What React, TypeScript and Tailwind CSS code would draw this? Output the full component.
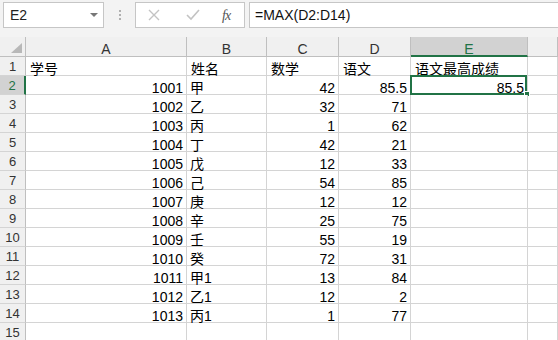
import { Fragment } from 'react';

const rows: [number, string, number, number][] = [
  [1001, '甲', 42, 85.5],
  [1002, '乙', 32, 71],
  [1003, '丙', 1, 62],
  [1004, '丁', 42, 21],
  [1005, '戊', 12, 33],
  [1006, '己', 54, 85],
  [1007, '庚', 12, 12],
  [1008, '辛', 25, 75],
  [1009, '壬', 55, 19],
  [1010, '癸', 72, 31],
  [1011, '甲1', 13, 84],
  [1012, '乙1', 12, 2],
  [1013, '丙1', 1, 77],
];

// F is wider than the window, so its letter is off screen
const cols = ['A', 'B', 'C', 'D', 'E', ''];

const cell = 'h-[19px] border-r border-b border-[#d4d4d4] bg-white text-[14px] leading-[14px] pt-[5px] whitespace-nowrap';

const RowHeader = ({ n, active }: { n: number; active?: boolean }) => (
  <div
    className={`h-[19px] border-b border-[#d4d4d4] text-center text-[13px] leading-[14px] pt-[3px] ${
      active ? 'bg-[#d2d2d2] text-[#217346] border-r-2 border-r-[#217346]' : 'bg-[#f0f0f0] text-[#333] border-r border-r-[#bfbfbf]'
    }`}
  >
    {n}
  </div>
);

const Toolbar = () => (
  <div className="flex h-[37px] items-start pt-[2px] pl-[3px]">
    <div className="w-[101px] h-[26px] bg-white border border-[#c6c6c6] flex items-center justify-between pl-[6px] pr-[5px] text-[14px] text-[#222]">
      <span>E2</span>
      <svg width="8" height="4" viewBox="0 0 8 4">
        <path d="M0 0 L8 0 L4 4 Z" fill="#777" />
      </svg>
    </div>
    <div className="w-[31px] h-[26px] flex flex-col items-center justify-center gap-[2px]">
      <span className="w-[2px] h-[2px] bg-[#b0b0b0]" />
      <span className="w-[2px] h-[2px] bg-[#b0b0b0]" />
      <span className="w-[2px] h-[2px] bg-[#b0b0b0]" />
    </div>
    <div className="w-[110px] h-[26px] bg-white border border-[#c6c6c6] flex items-center">
      <svg className="ml-[12px]" width="12" height="12" viewBox="0 0 12 12">
        <path d="M1 1 L11 11 M11 1 L1 11" stroke="#c3c3c3" strokeWidth="1.4" />
      </svg>
      <svg className="ml-[26px]" width="14" height="12" viewBox="0 0 14 12">
        <path d="M1 6 L5 10 L13 1" stroke="#c3c3c3" strokeWidth="1.6" fill="none" />
      </svg>
      <span className="ml-[22px] italic text-[14px] text-[#555] font-['Liberation_Serif',serif] tracking-[-1px]">
        fx
      </span>
    </div>
    <div className="ml-[4px] flex-1 h-[26px] bg-white border border-r-0 border-[#c6c6c6] flex items-center pl-[5px] text-[14px] text-[#111]">
      =MAX(D2:D14)
    </div>
  </div>
);

export default function App() {
  return (
    <div className="w-[558px] h-[340px] overflow-hidden bg-[#f3f3f3] font-['Liberation_Sans','Noto_Sans_CJK_SC',sans-serif] text-black">
      <Toolbar />
      <div className="grid grid-cols-[26px_161px_80px_72px_72px_117px_1fr]">
        <div className="relative h-[20px] bg-[#f0f0f0] border-r border-b border-[#bfbfbf]">
          <svg className="absolute right-[3px] bottom-[3px]" width="11" height="10" viewBox="0 0 11 10">
            <path d="M11 0 L11 10 L0 10 Z" fill="#b8b8b8" />
          </svg>
        </div>
        {cols.map((c, i) => (
          <div
            key={i}
            className={`h-[20px] text-center text-[14px] leading-[14px] pt-[5px] border-r border-[#bfbfbf] ${
              c === 'E'
                ? 'bg-[#d2d2d2] text-[#217346] border-b-2 border-b-[#217346]'
                : 'bg-[#f0f0f0] text-[#333] border-b border-b-[#bfbfbf]'
            }`}
          >
            {c}
          </div>
        ))}

        <RowHeader n={1} />
        <div className={`${cell} pl-[4px]`}>学号</div>
        <div className={`${cell} pl-[4px]`}>姓名</div>
        <div className={`${cell} pl-[4px]`}>数学</div>
        <div className={`${cell} pl-[4px]`}>语文</div>
        <div className={`${cell} pl-[4px]`}>语文最高成绩</div>
        <div className={cell} />

        {rows.map(([id, name, math, chinese], i) => (
          <Fragment key={id}>
            <RowHeader n={i + 2} active={i === 0} />
            <div className={`${cell} text-right pr-[3px]`}>{id}</div>
            <div className={`${cell} pl-[3px]`}>{name}</div>
            <div className={`${cell} text-right pr-[3px]`}>{math}</div>
            <div className={`${cell} text-right pr-[3px]`}>{chinese}</div>
            <div className={`${cell} relative text-right pr-[3px]`}>
              {i === 0 && (
                <>
                  85.5
                  <div className="absolute -left-px -top-px right-0 -bottom-px border-2 border-[#217346]" />
                  <div className="absolute right-[-3px] bottom-[-3px] w-[6px] h-[6px] bg-[#217346] border border-white" />
                </>
              )}
            </div>
            <div className={cell} />
          </Fragment>
        ))}

        <RowHeader n={15} />
        {cols.map((_, i) => (
          <div key={`r15-${i}`} className={cell} />
        ))}
      </div>
    </div>
  );
}
